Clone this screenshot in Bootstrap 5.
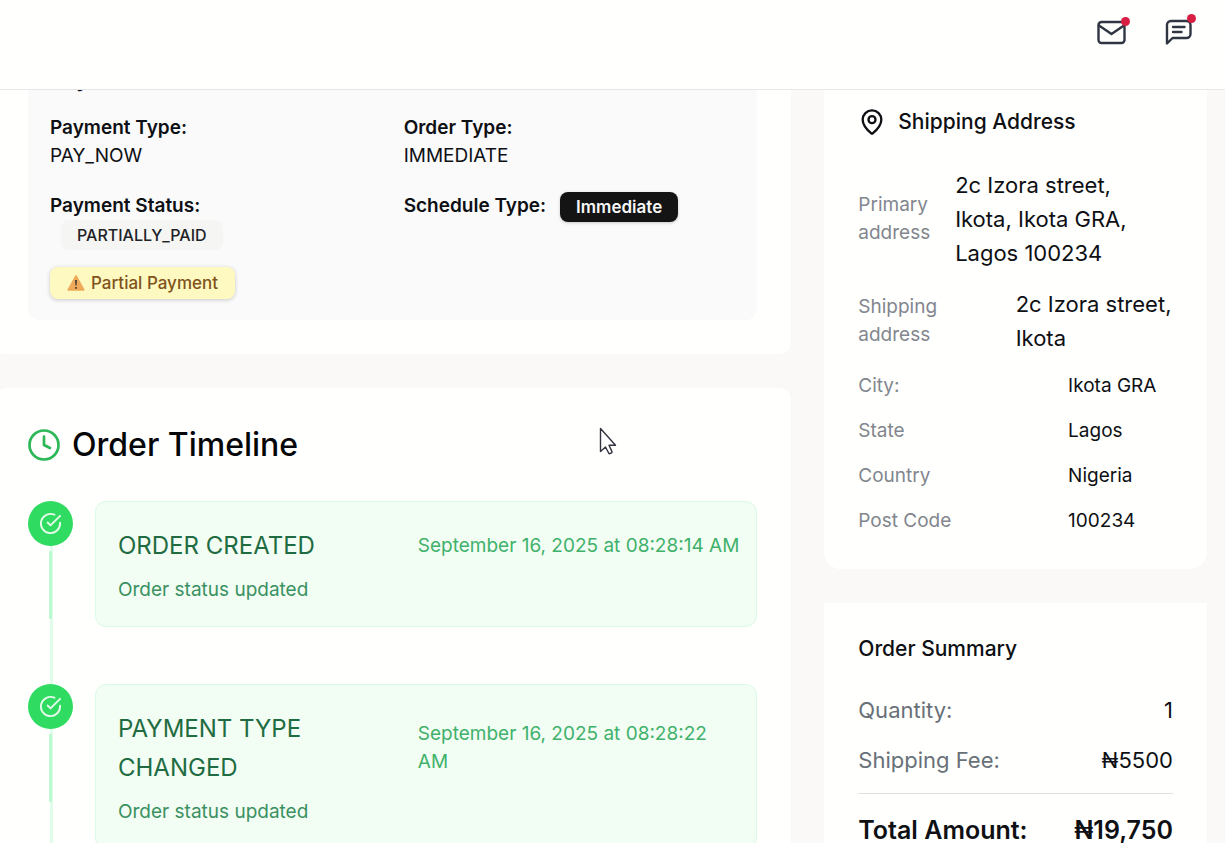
<!doctype html>
<html lang="en">
<head>
<meta charset="utf-8">
<meta name="viewport" content="width=device-width, initial-scale=1">
<title>Order details</title>
<link href="https://cdn.jsdelivr.net/npm/bootstrap@5.3.0/dist/css/bootstrap.min.css" rel="stylesheet">
<style>
  :root { --surface: #fffffd; --ink: #0e1014; --muted: #82868e; }
  body { font-family: Inter, "Liberation Sans", sans-serif; font-size: 19px; line-height: 28px; color: var(--ink); background: #faf9f8; }
  svg { display: block; flex: none; }
  .topbar { height: 90px; padding: 17px 31px 0 0; gap: 37px; background: var(--surface); border-bottom: 1px solid #e6e7ea; }
  .icon-btn { padding: 0; border: 0; background: none; color: #2f3542; width: 30px; height: 30px; }
  .alert-dot { width: 9px; height: 9px; background: #d81e42; top: 0; right: -3px; }
  .chat .alert-dot { top: -3px; right: -2px; }

  .page-grid { display: grid; grid-template-columns: 25fr 12fr; column-gap: 33px; margin-left: -6px; padding-right: 18px; }
  .left-col, .right-col { gap: 34px; }
  .panel { background: var(--surface); border-radius: 17px; padding: 34px; }
  .left-col .panel { border-radius: 12px; }
  .panel.cut { border-top-left-radius: 0; border-top-right-radius: 0; padding-top: 0; }

  .pay-box { background: #fafafb; border-radius: 0 0 11px 11px; padding: 0 22px 21px; }
  .pay-title { font-size: 22px; line-height: 28px; font-weight: 600; margin: -25px 0 21px; }
  .pay-grid { display: grid; grid-template-columns: 1fr 1fr; gap: 22px; }
  .term { font-weight: 600; }
  .tag { font-size: 17px; line-height: 30px; font-weight: 500; border-radius: 8px; padding: 0 16px; }
  .tag-grey { background: #f5f5f3; color: #202226; margin-left: 11px; font-size: 16px; }
  .tag-dark { background: #141414; color: #f7f7f7; margin-left: 14px; font-weight: 600; box-shadow: 0 1px 3px #0003; }
  .tag-warn { background: #fdf9c1; color: #80531a; margin-top: 17px; padding: 1px 17px; gap: 6px; box-shadow: 0 1px 4px #0003; }

  .section-title { font-size: 32px; line-height: 45px; font-weight: 500; margin-bottom: 34px; gap: 12px; color: #050608; }
  .timeline { position: relative; }
  .timeline::before { content: ""; position: absolute; left: 22px; top: 0; bottom: 0; width: 3px; background: #dffde9; }
  .step { position: relative; gap: 22px; margin-bottom: 57px; }
  .step-dot { width: 45px; height: 45px; background: #2fdb60; color: #e5fbea; }
  .step-bar { width: 3px; height: 68px; margin-top: 5px; background: #bcf8d0; border-radius: 1px; }
  .step-body { background: #f2fdf3; border: 1px solid #dcfbe6; border-radius: 11px; padding: 24px 22px 22px; }
  .step-head { display: grid; grid-template-columns: minmax(0, 18fr) minmax(0, 19fr); margin-bottom: 11px; }
  .step-name { font-size: 24px; line-height: 39px; font-weight: 400; color: #1f6c42; }
  .step-date { color: #40b16b; }
  .step-note { color: #3a9162; }

  .side-title { font-size: 21px; line-height: 28px; font-weight: 500; }
  .ship-title { gap: 12px; margin: 18px 0 32px; }
  .sum-title { line-height: 24px; margin-bottom: 32px; }
  .addr-list { row-gap: 17px; }
  .addr-row { display: grid; grid-template-columns: 2fr 1fr; }
  .addr-row.wide { grid-template-columns: 4fr 9fr; }
  .addr-row.half { grid-template-columns: 1fr 1fr; }
  .addr-row dt { font-weight: 400; color: var(--muted); }
  .big { font-size: 22px; line-height: 34px; }
  .sum-row { margin-bottom: 16px; }
  .sum-row dt { font-weight: 400; color: #687078; }
  .sum-total { font-size: 25px; line-height: 39px; font-weight: 600; border-top: 1px solid #dfe2e3; padding-top: 17px; }
  .sum-total dt { font-weight: 600; }

  .pointer { position: fixed; left: 599px; top: 427px; }
</style>
</head>
<body>
<div class="vh-100 d-flex flex-column overflow-hidden">
  <header class="topbar d-flex justify-content-end align-items-start flex-shrink-0">
    <button type="button" class="icon-btn position-relative" aria-label="Mail">
      <svg width="30" height="30" viewBox="0 0 30 30" fill="none" stroke="currentColor" stroke-width="2.400" stroke-linejoin="round" stroke-linecap="round"><rect x="1.500" y="5" width="26" height="21" rx="3"/><path d="M2 8.500 14.500 17 27 8.500"/></svg>
      <span class="alert-dot position-absolute rounded-circle"></span>
    </button>
    <button type="button" class="icon-btn chat position-relative" aria-label="Messages">
      <svg width="30" height="30" viewBox="0 0 30 30" fill="none" stroke="currentColor" stroke-width="2.400" stroke-linejoin="round" stroke-linecap="round"><path d="M3 26.500V8a4 4 0 0 1 4-4h15.500a4 4 0 0 1 4 4v9a4 4 0 0 1-4 4H8.500z"/><path d="M9 10h11.500M9 15h8.500"/></svg>
      <span class="alert-dot position-absolute rounded-circle"></span>
    </button>
  </header>

  <main class="flex-grow-1 overflow-hidden">
    <div class="page-grid">
      <div class="left-col d-flex flex-column">
        <section class="panel cut">
          <div class="pay-box">
            <h2 class="pay-title">Payment Information</h2>
            <div class="pay-grid">
              <div><div class="term">Payment Type:</div>PAY_NOW</div>
              <div><div class="term">Order Type:</div>IMMEDIATE</div>
              <div class="d-flex flex-column align-items-start">
                <div class="term">Payment Status:</div>
                <span class="tag tag-grey">PARTIALLY_PAID</span>
                <span class="tag tag-warn d-flex align-items-center">
                  <svg width="18" height="16" viewBox="0 0 18 16"><path d="M8.200.8a1 1 0 0 1 1.700 0l7.600 13.600a1 1 0 0 1-.9 1.400H1.400a1 1 0 0 1-.9-1.400z" fill="#eeaa58"/><path d="M8 5h2l-.4 5.500H8.400zM8.100 12h1.800v1.800H8.100z" fill="#4a4038"/></svg>
                  Partial Payment
                </span>
              </div>
              <div class="d-flex align-items-start">
                <div class="term">Schedule Type:</div>
                <span class="tag tag-dark">Immediate</span>
              </div>
            </div>
          </div>
        </section>

        <section class="panel">
          <h2 class="section-title d-flex align-items-center">
            <svg width="32" height="32" viewBox="0 0 32 32" fill="none" stroke="#2db757" stroke-width="2.700" stroke-linecap="round" stroke-linejoin="round"><circle cx="16" cy="16" r="14.500"/><path d="M16 7.500V16l6 3"/></svg>
            Order Timeline
          </h2>
          <div class="timeline">
            <article class="step d-flex">
              <div class="d-flex flex-column align-items-center">
                <div class="step-dot rounded-circle d-flex align-items-center justify-content-center">
                  <svg width="23" height="23" viewBox="0 0 24 24" fill="none" stroke="currentColor" stroke-width="2" stroke-linecap="round" stroke-linejoin="round"><path d="M22 11.080V12a10 10 0 1 1-5.930-9.140"/><path d="m9 11 3 3L22 4"/></svg>
                </div>
                <div class="step-bar"></div>
              </div>
              <div class="step-body flex-grow-1">
                <div class="step-head align-items-center">
                  <h3 class="step-name mb-0">ORDER CREATED</h3>
                  <time class="step-date text-nowrap">September 16, 2025 at 08:28:14 AM</time>
                </div>
                <p class="step-note mb-0">Order status updated</p>
              </div>
            </article>
            <article class="step d-flex">
              <div class="d-flex flex-column align-items-center">
                <div class="step-dot rounded-circle d-flex align-items-center justify-content-center">
                  <svg width="23" height="23" viewBox="0 0 24 24" fill="none" stroke="currentColor" stroke-width="2" stroke-linecap="round" stroke-linejoin="round"><path d="M22 11.080V12a10 10 0 1 1-5.930-9.140"/><path d="m9 11 3 3L22 4"/></svg>
                </div>
                <div class="step-bar"></div>
              </div>
              <div class="step-body flex-grow-1">
                <div class="step-head align-items-center">
                  <h3 class="step-name mb-0">PAYMENT TYPE<br>CHANGED</h3>
                  <time class="step-date text-nowrap">September 16, 2025 at 08:28:22<br>AM</time>
                </div>
                <p class="step-note mb-0">Order status updated</p>
              </div>
            </article>
          </div>
        </section>
      </div>

      <div class="right-col d-flex flex-column">
        <section class="panel cut">
          <h2 class="side-title ship-title d-flex align-items-center">
            <svg width="28" height="28" viewBox="0 0 24 24" fill="none" stroke="currentColor" stroke-width="2" stroke-linecap="round" stroke-linejoin="round"><path d="M20 10c0 4.990-5.540 10.190-7.400 11.800a1 1 0 0 1-1.200 0C9.540 20.190 4 14.990 4 10a8 8 0 0 1 16 0"/><circle cx="12" cy="10" r="3"/></svg>
            Shipping Address
          </h2>
          <dl class="addr-list d-flex flex-column mb-0">
            <div class="addr-row wide align-items-center"><dt>Primary<br>address</dt><dd class="big mb-0">2c Izora street,<br>Ikota, Ikota GRA,<br>Lagos 100234</dd></div>
            <div class="addr-row half align-items-center"><dt>Shipping<br>address</dt><dd class="big mb-0 text-nowrap">2c Izora street,<br>Ikota</dd></div>
            <div class="addr-row"><dt>City:</dt><dd class="mb-0">Ikota GRA</dd></div>
            <div class="addr-row"><dt>State</dt><dd class="mb-0">Lagos</dd></div>
            <div class="addr-row"><dt>Country</dt><dd class="mb-0">Nigeria</dd></div>
            <div class="addr-row"><dt>Post Code</dt><dd class="mb-0">100234</dd></div>
          </dl>
        </section>

        <section class="panel rounded-0">
          <h2 class="side-title sum-title">Order Summary</h2>
          <dl class="mb-0">
            <div class="sum-row big d-flex justify-content-between"><dt>Quantity:</dt><dd class="mb-0">1</dd></div>
            <div class="sum-row big d-flex justify-content-between"><dt>Shipping Fee:</dt><dd class="mb-0">₦5500</dd></div>
            <div class="sum-total d-flex justify-content-between"><dt>Total Amount:</dt><dd class="mb-0">₦19,750</dd></div>
          </dl>
        </section>
      </div>
    </div>
  </main>
</div>
<svg class="pointer" width="18" height="29" viewBox="0 0 18 29"><path d="M1.500 1.500v23l5-4.500 3.300 6.300c.6 1 3.800-.6 3.200-1.700L10 18.300h6.500z" fill="#fff" stroke="#33333f" stroke-width="1.400" stroke-linejoin="round"/></svg>
<script src="https://cdn.jsdelivr.net/npm/bootstrap@5.3.0/dist/js/bootstrap.bundle.min.js"></script>
</body>
</html>
